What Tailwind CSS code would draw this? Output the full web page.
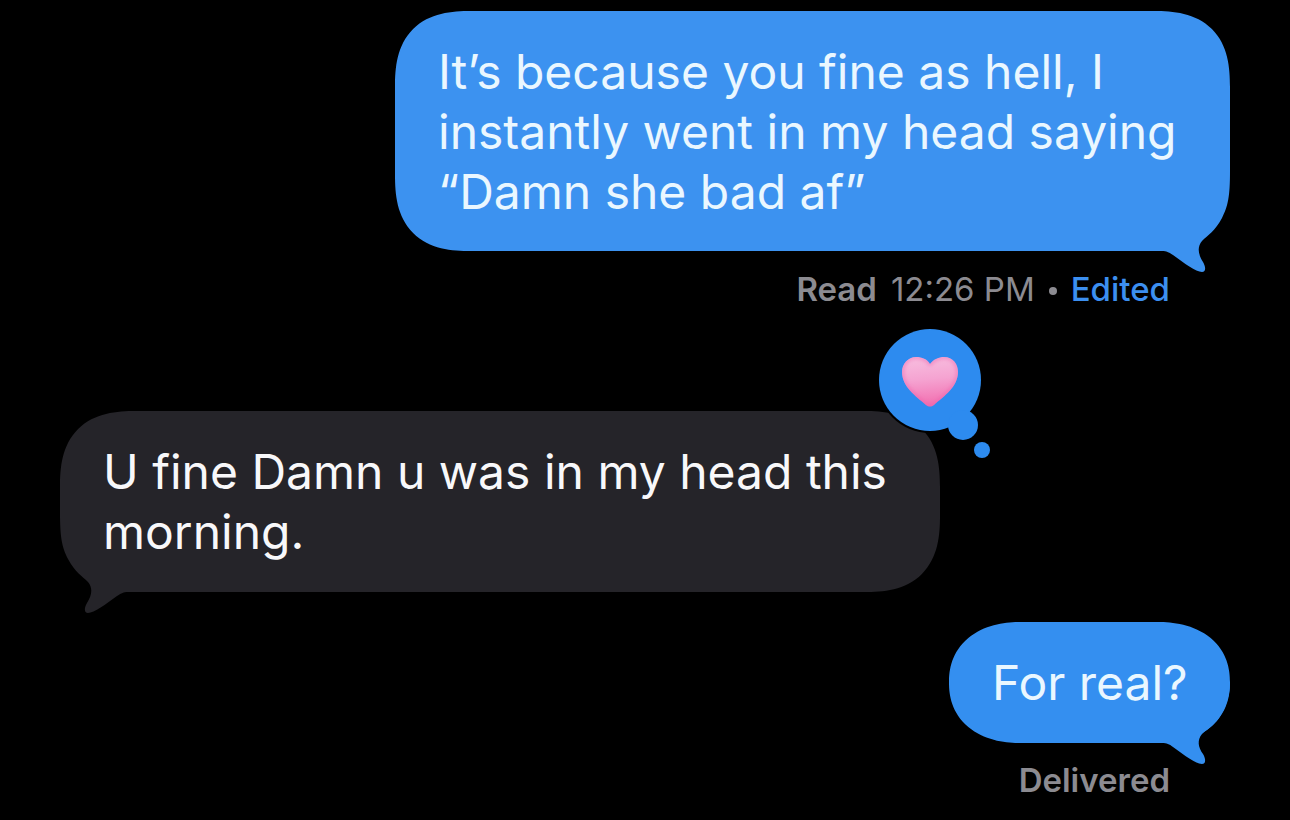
<!DOCTYPE html>
<html lang="en">
<head>
<meta charset="utf-8">
<meta name="viewport" content="width=device-width, initial-scale=1">
<title>Messages</title>
<script src="https://cdn.jsdelivr.net/npm/@tailwindcss/browser@4"></script>
</head>
<body class="min-h-screen bg-black font-['Inter',sans-serif]">
<main class="flex flex-col px-[60px] pt-[11px] text-[48px] leading-[60px]">

  <section class="flex flex-col items-end">
    <div class="relative w-[835px] max-w-full rounded-[76px] rounded-br-[100px] bg-[#3c92f0] px-[43px] pt-[31px] pb-[29px] text-[#eaf7ff] [corner-shape:superellipse(1.35)_superellipse(1.35)_round_superellipse(1.35)]">
      <svg class="absolute right-0 -bottom-[21px] h-[121px] w-[100px] text-[#3c92f0]" viewBox="0 0 100 121" fill="currentColor" aria-hidden="true"><path d="M0 0H100V20C100 46 98 55 92 67C85 80 78 84 72 90C67 96 68 103 73 111C76 116 76 121 72 121C66 121 54 112 43 104C38 101 37 100 32 100H0Z"/></svg>
      <p class="relative">It’s because you fine as hell, I<br><span class="whitespace-nowrap">instantly went in my head saying</span><br>“Damn she bad af”</p>
    </div>
    <p class="mt-[18px] mr-[60px] flex items-center gap-[14px] text-[33px] leading-[40px] text-[#8c8b91]">
      <span class="font-semibold">Read</span>
      <time>12:26 PM</time>
      <span class="mt-1 size-2 rounded-full bg-[#8c8b91]"></span>
      <button type="button" class="font-medium text-[#3c8ff0]">Edited</button>
    </p>
  </section>

  <section class="mt-[102px] flex flex-col items-start">
    <div class="relative w-[880px] max-w-full rounded-[76px] rounded-bl-[100px] bg-[#252429] px-[43px] pt-[31px] pb-[30px] text-[#f8f8fa] [corner-shape:superellipse(1.35)_superellipse(1.35)_superellipse(1.35)_round]">
      <svg class="absolute left-0 -bottom-[21px] h-[121px] w-[100px] text-[#252429]" viewBox="0 0 100 121" fill="currentColor" aria-hidden="true"><path d="M100 0H0V20C0 46 2 55 8 67C15 80 22 84 28 90C33 96 32 103 27 111C24 116 24 121 28 121C34 121 46 112 57 104C62 101 63 100 68 100H100Z"/></svg>
      <p class="relative"><span class="whitespace-nowrap">U fine Damn u was in my head this</span><br>morning.</p>
      <svg class="absolute -top-[84px] -right-[53px] h-[136px] w-[116px]" viewBox="0 0 116 136" role="img" aria-label="Heart reaction">
        <defs>
          <linearGradient id="heart" x1="0.45" y1="0" x2="0.55" y2="1">
            <stop offset="0" stop-color="#f8c3e2"/>
            <stop offset="0.45" stop-color="#f5a3d1"/>
            <stop offset="0.75" stop-color="#f37fba"/>
            <stop offset="1" stop-color="#ee5fa6"/>
          </linearGradient>
          <filter id="glow" x="-0.2" y="-0.2" width="1.4" height="1.4"><feGaussianBlur stdDeviation="2"/></filter>
          <clipPath id="shape"><path d="M53 37C57 32 62 30 67 30C76 30 81 37 81 45C81 60 67 69 57 78Q53 81 49 78C39 69 25 60 25 45C25 37 31 30 39 30C45 30 50 32 53 37Z"/></clipPath>
        </defs>
        <circle cx="53" cy="53" r="53" fill="#000"/>
        <circle cx="53" cy="53" r="51" fill="#2d8bef"/>
        <circle cx="86" cy="98" r="15" fill="#2d8bef"/>
        <circle cx="105" cy="123" r="8" fill="#2d8bef"/>
        <g clip-path="url(#shape)">
          <path fill="url(#heart)" d="M20 25H85V85H20Z"/>
          <path d="M53 37C57 32 62 30 67 30C76 30 81 37 81 45C81 60 67 69 57 78Q53 81 49 78C39 69 25 60 25 45C25 37 31 30 39 30C45 30 50 32 53 37Z" fill="none" stroke="#ee62ab" stroke-width="2" filter="url(#glow)"/>
        </g>
      </svg>
    </div>
  </section>

  <section class="mt-[30px] flex flex-col items-end">
    <div class="relative w-[281px] max-w-full rounded-[72px/60px] bg-[#348ff0] px-[43px] pt-[31px] pb-[30px] text-[#eaf7ff] [corner-shape:superellipse(1.15)]">
      <svg class="absolute right-0 -bottom-[21px] h-[81px] w-[70px] text-[#348ff0]" viewBox="0 0 70 81" fill="currentColor" aria-hidden="true"><path d="M0 0H70C70 17 62 33 54 41C49 46 46 47 42 51C37 57 38 64 43 71C46 76 46 81 42 81C36 81 24 72 13 64C9 61 7 60 2 60H0Z"/></svg>
      <p class="relative whitespace-nowrap">For real?</p>
    </div>
    <p class="mt-[17px] mr-[60px] text-[33px] leading-[40px] font-semibold text-[#8c8b91]">Delivered</p>
  </section>

</main>
</body>
</html>
